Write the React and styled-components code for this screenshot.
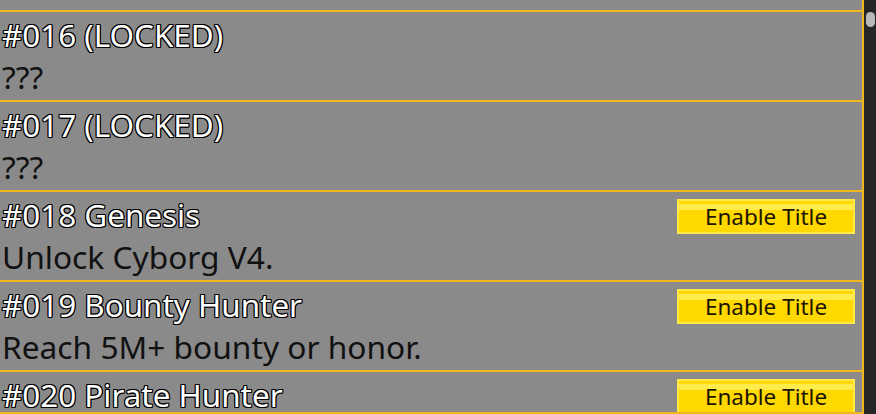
import React from 'react';
import styled, { createGlobalStyle } from 'styled-components';

const GlobalStyle = createGlobalStyle`
  html, body {
    margin: 0;
    padding: 0;
    background: #262626;
    overflow: hidden;
  }
`;

const Frame = styled.div`
  display: flex;
  width: 876px;
  height: 414px;
  font-family: "Noto Sans", "Open Sans", sans-serif;
`;

const Panel = styled.div`
  flex: 1;
  height: 412px;
  overflow: hidden;
  background: #8a8a8a;
  border-right: 2px solid #f1b51e;
  border-bottom: 2px solid #f1b51e;
`;

const List = styled.div`
  margin-top: -80px;
`;

const Row = styled.div`
  display: flex;
  justify-content: space-between;
  align-items: flex-start;
  height: 90px;
  box-sizing: border-box;
  border-top: 2px solid #f1b51e;
  padding: 0 7px 0 2px;
`;

const Info = styled.div`
  display: flex;
  flex-direction: column;
  padding-top: 1px;
`;

const Title = styled.div`
  font-size: 31.4px;
  line-height: 43px;
  color: #fff;
  text-shadow: -1px 0 #000, 1px 0 #000, 0 -1px #000, 0 1px #000,
    -1px -1px #000, 1px 1px #000, -1px 1px #000, 1px -1px #000;
`;

const Desc = styled.div`
  font-size: 31.7px;
  line-height: 42px;
  color: #111;
`;

const EnableButton = styled.button`
  margin-top: 7px;
  width: 178px;
  height: 35px;
  box-sizing: border-box;
  border: 2px solid #ffe94a;
  background: linear-gradient(#ffd800 0, #ffd800 3px, #ffeb4c 3px, #ffeb4c 9px, #ffd800 9px);
  font-family: inherit;
  font-size: 22.5px;
  color: #1a1400;
  padding: 0;
  cursor: pointer;
`;

const Track = styled.div`
  width: 12px;
  position: relative;
`;

const Thumb = styled.div`
  position: absolute;
  top: 12px;
  left: 2px;
  width: 9px;
  height: 15px;
  border-radius: 5px;
  background: #b8b8b8;
`;

const titles = [
  { id: '015', name: '(LOCKED)', desc: '???', locked: true },
  { id: '016', name: '(LOCKED)', desc: '???', locked: true },
  { id: '017', name: '(LOCKED)', desc: '???', locked: true },
  { id: '018', name: 'Genesis', desc: 'Unlock Cyborg V4.' },
  { id: '019', name: 'Bounty Hunter', desc: 'Reach 5M+ bounty or honor.' },
  { id: '020', name: 'Pirate Hunter', desc: 'Defeat 50 pirates.' },
];

const App = () => (
  <Frame>
    <GlobalStyle />
    <Panel>
      <List>
        {titles.map((t) => (
          <Row key={t.id}>
            <Info>
              <Title>#{t.id} {t.name}</Title>
              <Desc>{t.desc}</Desc>
            </Info>
            {!t.locked && <EnableButton>Enable Title</EnableButton>}
          </Row>
        ))}
      </List>
    </Panel>
    <Track>
      <Thumb />
    </Track>
  </Frame>
);

export default App;
